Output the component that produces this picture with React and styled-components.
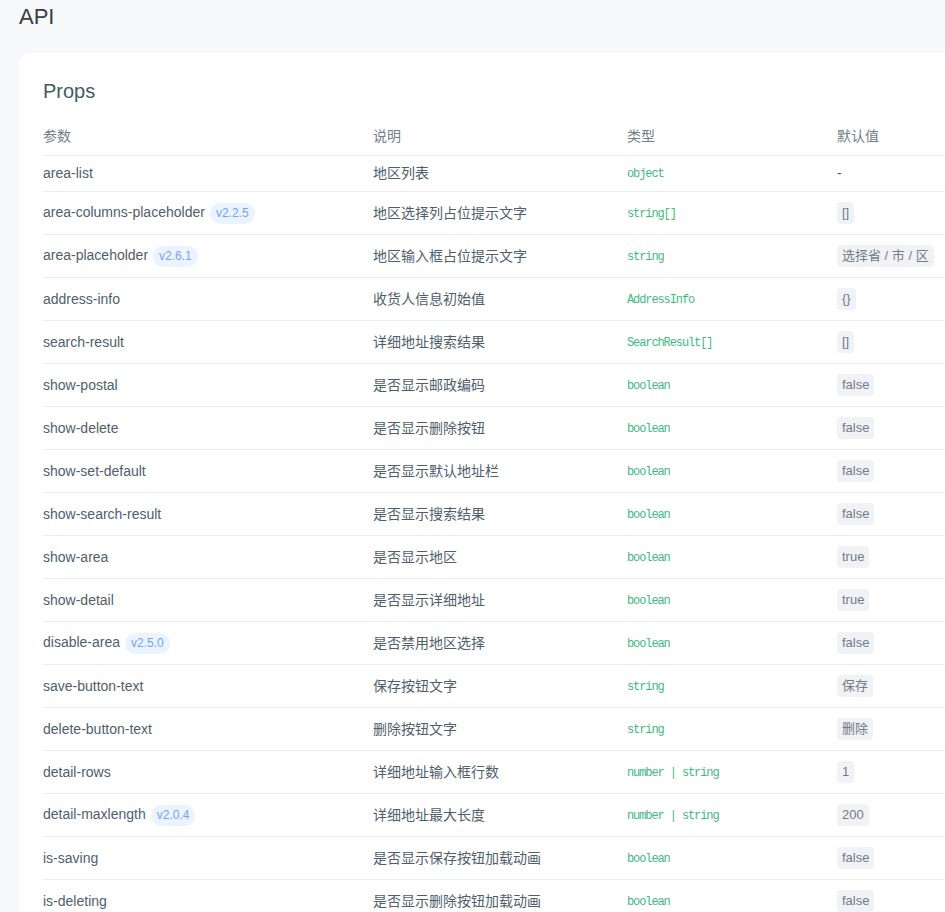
import styled, { createGlobalStyle } from "styled-components";

const GlobalStyle = createGlobalStyle`
  html, body {
    margin: 0;
    padding: 0;
    overflow: hidden;
    background: #f7f8fa;
    font-family: "Liberation Sans", "Noto Sans CJK SC", sans-serif;
  }
`;

const Page = styled.div`
  width: 1100px;
  padding: 0 0 40px 19px;
`;

const Title = styled.h2`
  margin: 0;
  height: 53px;
  padding-top: 3px;
  box-sizing: border-box;
  font-size: 22px;
  line-height: 28px;
  font-weight: 400;
  color: #3a3d44;
`;

const Card = styled.section`
  background: #fff;
  border-radius: 12px;
  padding: 24px;
`;

const SubTitle = styled.h3`
  margin: 0;
  font-size: 20px;
  line-height: 28px;
  font-weight: 400;
  color: #455a64;
`;

const Table = styled.table`
  width: 100%;
  margin-top: 13px;
  border-collapse: collapse;
  table-layout: fixed;
  font-size: 14px;
  line-height: 21px;
  color: #505e6c;
`;

const Th = styled.th`
  padding: 8px 8px 8px 0;
  text-align: left;
  font-weight: 400;
  color: #737e8a;
`;

const Td = styled.td`
  padding: 6px 8px 6px 0;
  border-top: 1px solid #ebedf0;
  white-space: nowrap;
`;

const Version = styled.span`
  display: inline-block;
  vertical-align: middle;
  margin: 4px 0 4px 5px;
  padding: 0 6px;
  height: 21px;
  line-height: 21px;
  border-radius: 11px;
  font-size: 12px;
  color: #74a3f5;
  background: #ebf3ff;
`;

const Type = styled.span`
  font-family: "Liberation Mono", monospace;
  font-size: 12px;
  letter-spacing: -1.1px;
  color: #42b983;
  white-space: pre;
`;

const Value = styled.code`
  display: inline-block;
  vertical-align: middle;
  margin: 4px 0;
  padding: 0 5px;
  height: 22px;
  line-height: 22px;
  border-radius: 4px;
  font-family: inherit;
  font-size: 13px;
  color: #727b87;
  background: #f0f2f5;
`;

const rows = [
  ["area-list", null, "地区列表", "object", null],
  ["area-columns-placeholder", "v2.2.5", "地区选择列占位提示文字", "string[]", "[]"],
  ["area-placeholder", "v2.6.1", "地区输入框占位提示文字", "string", "选择省 / 市 / 区"],
  ["address-info", null, "收货人信息初始值", "AddressInfo", "{}"],
  ["search-result", null, "详细地址搜索结果", "SearchResult[]", "[]"],
  ["show-postal", null, "是否显示邮政编码", "boolean", "false"],
  ["show-delete", null, "是否显示删除按钮", "boolean", "false"],
  ["show-set-default", null, "是否显示默认地址栏", "boolean", "false"],
  ["show-search-result", null, "是否显示搜索结果", "boolean", "false"],
  ["show-area", null, "是否显示地区", "boolean", "true"],
  ["show-detail", null, "是否显示详细地址", "boolean", "true"],
  ["disable-area", "v2.5.0", "是否禁用地区选择", "boolean", "false"],
  ["save-button-text", null, "保存按钮文字", "string", "保存"],
  ["delete-button-text", null, "删除按钮文字", "string", "删除"],
  ["detail-rows", null, "详细地址输入框行数", "number | string", "1"],
  ["detail-maxlength", "v2.0.4", "详细地址最大长度", "number | string", "200"],
  ["is-saving", null, "是否显示保存按钮加载动画", "boolean", "false"],
  ["is-deleting", null, "是否显示删除按钮加载动画", "boolean", "false"],
];

export default function App() {
  return (
    <Page>
      <GlobalStyle />
      <Title>API</Title>
      <Card>
        <SubTitle>Props</SubTitle>
        <Table>
          <colgroup>
            <col style={{ width: 330 }} />
            <col style={{ width: 254 }} />
            <col style={{ width: 210 }} />
            <col />
          </colgroup>
          <thead>
            <tr>
              <Th>参数</Th>
              <Th>说明</Th>
              <Th>类型</Th>
              <Th>默认值</Th>
            </tr>
          </thead>
          <tbody>
            {rows.map(([name, version, desc, type, def]) => (
              <tr key={name}>
                <Td>
                  {name}
                  {version && <Version>{version}</Version>}
                </Td>
                <Td>{desc}</Td>
                <Td>
                  <Type>{type}</Type>
                </Td>
                <Td>{def ? <Value>{def}</Value> : "-"}</Td>
              </tr>
            ))}
          </tbody>
        </Table>
      </Card>
    </Page>
  );
}
